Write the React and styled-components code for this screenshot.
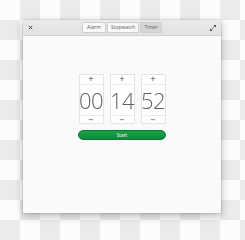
import React, { useState } from 'react';
import styled, { createGlobalStyle } from 'styled-components';

const Global = createGlobalStyle`
  html, body { margin: 0; padding: 0; }
  body { font-family: "Open Sans", "Liberation Sans", sans-serif; }
`;

const Desktop = styled.div`
  width: 245px;
  height: 240px;
  box-sizing: border-box;
  padding: 20px 24px 0 23px;
  background: repeating-conic-gradient(#ebebeb 0 25%, #fcfcfc 0 50%) 0 0 / 40px 40px;
  overflow: hidden;
`;

const Window = styled.div`
  width: 198px;
  height: 193px;
  display: flex;
  flex-direction: column;
  background: #fafafa;
  border-radius: 2px 2px 0 0;
  box-shadow: 0 0 0 1px rgba(0, 0, 0, 0.08), 0 3px 9px rgba(0, 0, 0, 0.28);
`;

const TitleBar = styled.div`
  height: 15px;
  flex: none;
  display: grid;
  grid-template-columns: 1fr auto 1fr;
  align-items: center;
  padding: 0 5px;
  background: linear-gradient(#eaeaea, #e2e2e2);
  border-bottom: 1px solid #d2d2d2;
  border-radius: 2px 2px 0 0;
`;

const IconSlot = styled.div`
  display: flex;
  justify-content: ${(p) => (p.$end ? 'flex-end' : 'flex-start')};
  align-items: center;
`;

const Tabs = styled.div`
  display: flex;
  gap: 1px;
`;

const Tab = styled.button`
  height: 11px;
  padding: 0 ${(p) => p.$pad}px;
  margin: 0;
  border: 1px solid #cfcfcf;
  border-radius: 1px;
  background: ${(p) => (p.$active ? '#d6d6d6' : '#f8f8f8')};
  color: #5a5a5a;
  font-family: "Open Sans", "Liberation Sans", sans-serif;
  font-size: 5px;
  line-height: 9px;
  cursor: pointer;
`;

const Body = styled.div`
  flex: 1;
  display: flex;
  flex-direction: column;
  align-items: center;
  padding-top: 38px;
`;

const Spinners = styled.div`
  display: flex;
  align-items: center;
`;

const Colon = styled.span`
  width: 6px;
  text-align: center;
  color: #c4c4c4;
  font-size: 6px;
  line-height: 6px;
`;

const Spinner = styled.div`
  width: 25px;
  height: 50px;
  display: flex;
  flex-direction: column;
  background: #fff;
  border: 1px solid #e4e4e4;
  box-sizing: border-box;
`;

const StepButton = styled.div`
  height: 10px;
  flex: none;
  box-sizing: border-box;
  text-align: center;
  overflow: hidden;
  color: #333;
  font-family: "DejaVu Sans", sans-serif;
  font-size: 7px;
  line-height: 9px;
  transform: translateZ(0);
  opacity: 0.99;
  ${(p) => (p.$top ? 'border-bottom: 1px solid #ececec;' : 'border-top: 1px solid #ececec;')}
`;

const Value = styled.div`
  flex: 1;
  display: flex;
  align-items: center;
  justify-content: center;
  font-size: 22px;
  font-weight: 300;
  color: #606060;
  letter-spacing: -0.5px;
  transform: translateZ(0);
  opacity: 0.99;
`;

const StartButton = styled.button`
  margin-top: 6px;
  width: 88px;
  height: 10px;
  padding: 0;
  border: 1px solid #0d7a33;
  border-radius: 5px;
  background: linear-gradient(#16a349, #0e8a3b);
  color: #fff;
  font-family: "Open Sans", "Liberation Sans", sans-serif;
  font-size: 4.8px;
  line-height: 8px;
`;

const pad = (n) => String(n).padStart(2, '0');

function TimeSpinner({ value }) {
  return (
    <Spinner>
      <StepButton $top>+</StepButton>
      <Value>{pad(value)}</Value>
      <StepButton>−</StepButton>
    </Spinner>
  );
}

export default function App() {
  const [tab, setTab] = useState('Timer');
  const tabs = [
    ['Alarm', 4],
    ['Stopwatch', 3],
    ['Timer', 3],
  ];

  return (
    <>
      <Global />
      <Desktop>
        <Window>
          <TitleBar>
            <IconSlot>
              <svg width="5" height="5" viewBox="0 0 5 5">
                <path d="M0.8 0.8L4.2 4.2M4.2 0.8L0.8 4.2" stroke="#444" strokeWidth="1" />
              </svg>
            </IconSlot>
            <Tabs>
              {tabs.map(([name, p]) => (
                <Tab key={name} $pad={p} $active={tab === name} onClick={() => setTab(name)}>
                  {name}
                </Tab>
              ))}
            </Tabs>
            <IconSlot $end>
              <svg width="6" height="6" viewBox="0 0 6 6">
                <path d="M3.5 0H6V2.5Z" fill="#444" />
                <path d="M0 3.5V6H2.5Z" fill="#444" />
                <path d="M4.5 1.5L1.5 4.5" stroke="#444" strokeWidth="0.7" />
              </svg>
            </IconSlot>
          </TitleBar>
          <Body>
            <Spinners>
              <TimeSpinner value={0} />
              <Colon>:</Colon>
              <TimeSpinner value={14} />
              <Colon>:</Colon>
              <TimeSpinner value={52} />
            </Spinners>
            <StartButton>Start</StartButton>
          </Body>
        </Window>
      </Desktop>
    </>
  );
}
